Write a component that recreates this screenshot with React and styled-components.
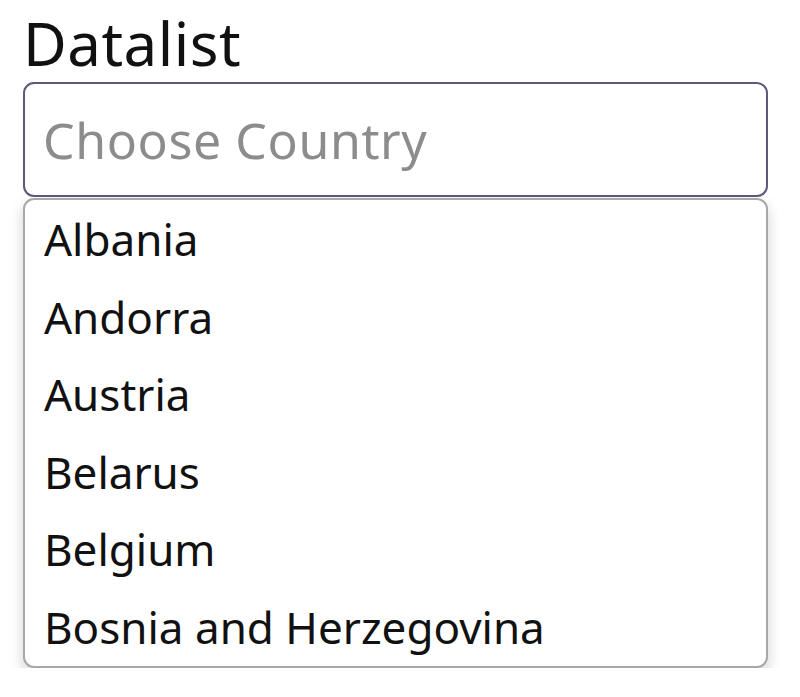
import styled, { createGlobalStyle } from 'styled-components';

const GlobalStyle = createGlobalStyle`
    body {
        margin: 0;
        background: #ffffff;
        font-family: "Noto Sans", "Open Sans", sans-serif;
    }
`;

const Page = styled.div`
    padding: 8px 32px 0 23px;
    width: 800px;
    box-sizing: border-box;
`;

const Title = styled.label`
    display: block;
    font-size: 60px;
    font-weight: 400;
    color: #111;
    line-height: 70px;
    letter-spacing: 0.5px;
    margin-left: 0;
    margin-bottom: 4px;
`;

const Input = styled.input`
    display: block;
    width: 745px;
    height: 115px;
    box-sizing: border-box;
    padding: 0 18px;
    border: 2.5px solid #5b5a7a;
    border-radius: 11px;
    font-family: "Noto Sans", sans-serif;
    font-size: 50px;
    letter-spacing: 0.6px;
    color: #222;
    outline: none;

    &::placeholder {
        color: #8c8c8c;
    }
`;

const Options = styled.ul`
    list-style: none;
    margin: 1px 0 0;
    padding: 1px 0 0;
    width: 745px;
    box-sizing: border-box;
    border: 2px solid #a8a8a8;
    border-radius: 11px;
    box-shadow: 0 6px 14px rgba(0, 0, 0, 0.18);
    background: #fff;
`;

const Option = styled.li`
    padding: 0 19px;
    height: 77.5px;
    line-height: 77.5px;
    font-size: 44px;
    color: #111;
    font-family: "Noto Sans", sans-serif;
`;

const countries = ['Albania', 'Andorra', 'Austria', 'Belarus', 'Belgium', 'Bosnia and Herzegovina'];

const App = () => {
    return (
        <>
            <GlobalStyle />
            <Page>
                <Title htmlFor="country">Datalist</Title>
                <Input id="country" placeholder="Choose Country" />
                <Options>
                    {countries.map(c => (
                        <Option key={c}>{c}</Option>
                    ))}
                </Options>
            </Page>
        </>
    );
};

export default App;
